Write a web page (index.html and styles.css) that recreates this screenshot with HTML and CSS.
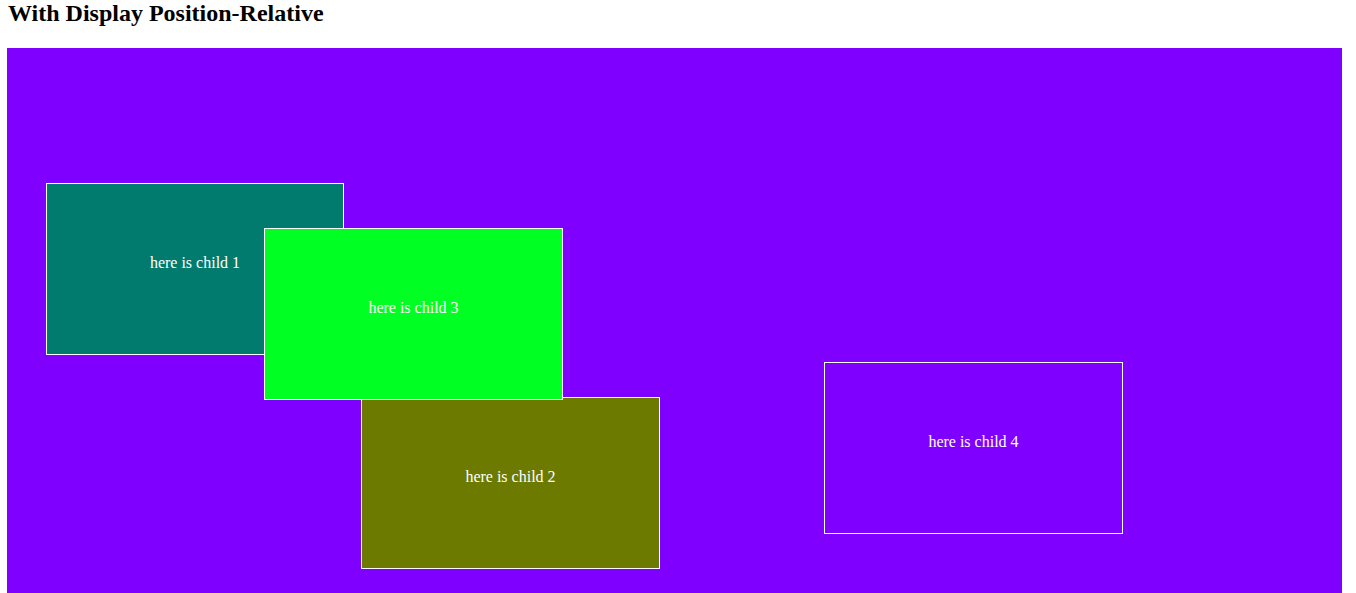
FILE: index.html
```html
<!DOCTYPE html>
<html>
<head>
<meta charset="utf-8">
<title>Position Relative</title>
<link rel="stylesheet" href="styles.css">
</head>
<body>
<h2 class="title">With Display Position-Relative</h2>
<div class="parent">
  <div class="child child-1">here is child 1</div>
  <div class="child child-2">here is child 2</div>
  <div class="child child-3">here is child 3</div>
  <div class="child child-4">here is child 4</div>
</div>
</body>
</html>
```
FILE: styles.css
```css
html, body {
  margin: 0;
  padding: 0;
  background: #ffffff;
  overflow: hidden;
}

body {
  padding: 0 8px;
  font-family: "Liberation Serif", "Times New Roman", serif;
  color: #000;
}

.title {
  margin: 0 0 21px;
  font-size: 24px;
  line-height: 27px;
  font-weight: bold;
}

.parent {
  position: relative;
  margin-left: -1px;
  width: 1335px;
  height: 545px;
  background: #8000ff;
}

.child {
  position: absolute;
  box-sizing: border-box;
  width: 299px;
  height: 172px;
  border: 1px solid #ffffff;
  display: flex;
  align-items: center;
  justify-content: center;
  padding-bottom: 13px;
  color: #ffffff;
  font-size: 16px;
}

.child-1 {
  left: 39px;
  top: 135px;
  width: 298px;
  background: #007b6d;
}

.child-2 {
  left: 354px;
  top: 349px;
  background: #6c7a00;
}

.child-3 {
  left: 257px;
  top: 180px;
  background: #00ff22;
}

.child-4 {
  left: 817px;
  top: 314px;
  background: #8000ff;
}
```
